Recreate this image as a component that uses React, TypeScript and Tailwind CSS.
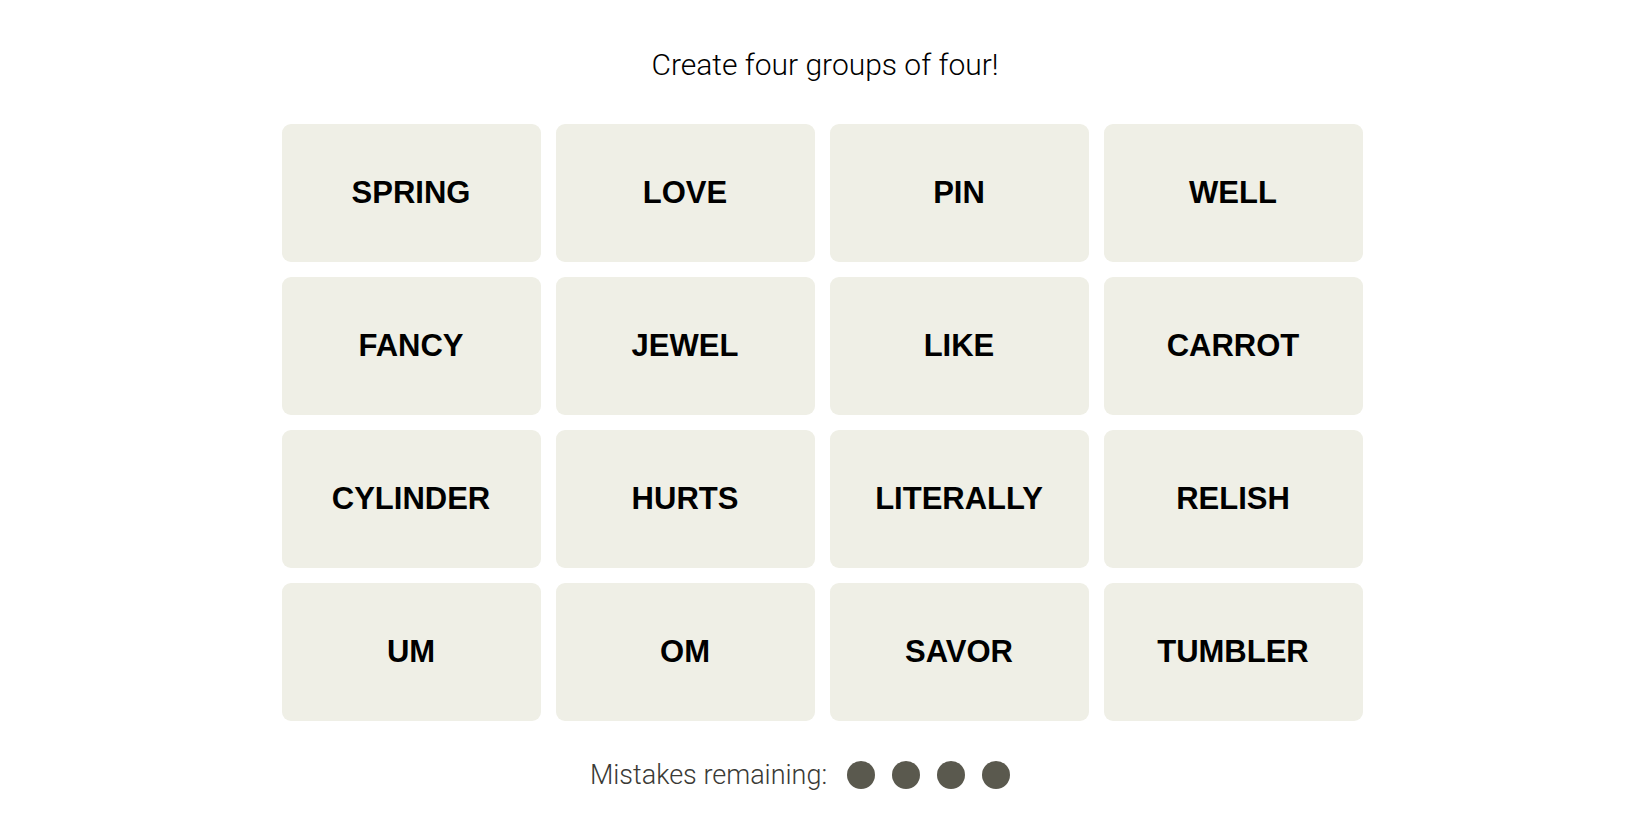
const words = [
  'SPRING', 'LOVE', 'PIN', 'WELL',
  'FANCY', 'JEWEL', 'LIKE', 'CARROT',
  'CYLINDER', 'HURTS', 'LITERALLY', 'RELISH',
  'UM', 'OM', 'SAVOR', 'TUMBLER',
];

export default function App() {
  const mistakesLeft = 4;

  return (
    <div className="min-h-[825px] bg-white flex flex-col items-center pt-[47px] font-['Roboto','Liberation_Sans',sans-serif]">
      {/* Header */}
      <p className="text-[30px] leading-[36px] font-light text-black">Create four groups of four!</p>

      {/* Board */}
      <div className="mt-[41px] mr-[6px] grid grid-cols-[repeat(4,259px)] auto-rows-[138px] gap-[15px]">
        {words.map((word) => (
          <button
            key={word}
            className="rounded-[9px] bg-[#efefe6] flex items-center justify-center font-['Liberation_Sans',Arial,sans-serif] font-bold text-[31px] text-black"
          >
            {word}
          </button>
        ))}
      </div>

      {/* Mistakes */}
      <div className="mt-[39px] h-[30px] flex items-center pr-[50px]">
        <span className="text-[27px] leading-[30px] font-light text-[#3a3a35]">Mistakes remaining:</span>
        <div className="ml-[20px] flex gap-[17px]">
          {Array.from({ length: mistakesLeft }).map((_, i) => (
            <span key={i} className="w-[28px] h-[28px] rounded-full bg-[#5a594e]" />
          ))}
        </div>
      </div>
    </div>
  );
}
